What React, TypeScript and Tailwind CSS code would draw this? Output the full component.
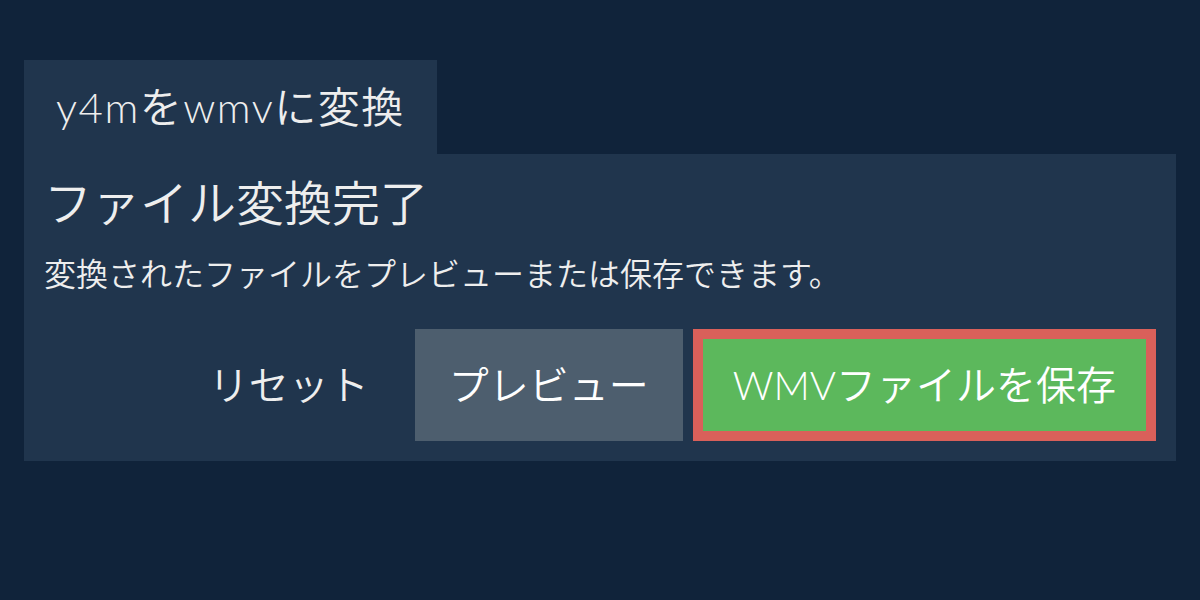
export default function App() {
  return (
    <div
      className="min-h-[600px] w-full bg-[#10233a] px-6 pt-[60px] font-[350] text-[#eeeeee]"
      style={{ fontFamily: 'Lato, "Noto Sans CJK JP", sans-serif' }}
    >
      {/* Tab */}
      <div className="flex">
        <div className="bg-[#20354d] px-8 py-5 text-[42px] leading-[54px] tracking-[1.5px]">y4mをwmvに変換</div>
      </div>

      {/* Panel */}
      <div className="bg-[#20354d] p-5">
        <h2 className="text-[48px] leading-[1.2]">ファイル変換完了</h2>
        <p className="mt-[18px] text-[32px] leading-[1.5]">変換されたファイルをプレビューまたは保存できます。</p>

        <div className="mt-[31px] flex justify-end gap-[10px]">
          <button className="h-[112px] px-[36px] text-[40px] text-[#eeeeee]">リセット</button>
          <button className="h-[112px] bg-[#4d5e6e] px-[34px] text-[40px] text-white">プレビュー</button>
          <button className="h-[112px] border-[10px] border-[#d9605a] bg-[#5cb85c] px-[30px] text-[40px] text-white">
            WMVファイルを保存
          </button>
        </div>
      </div>
    </div>
  )
}
